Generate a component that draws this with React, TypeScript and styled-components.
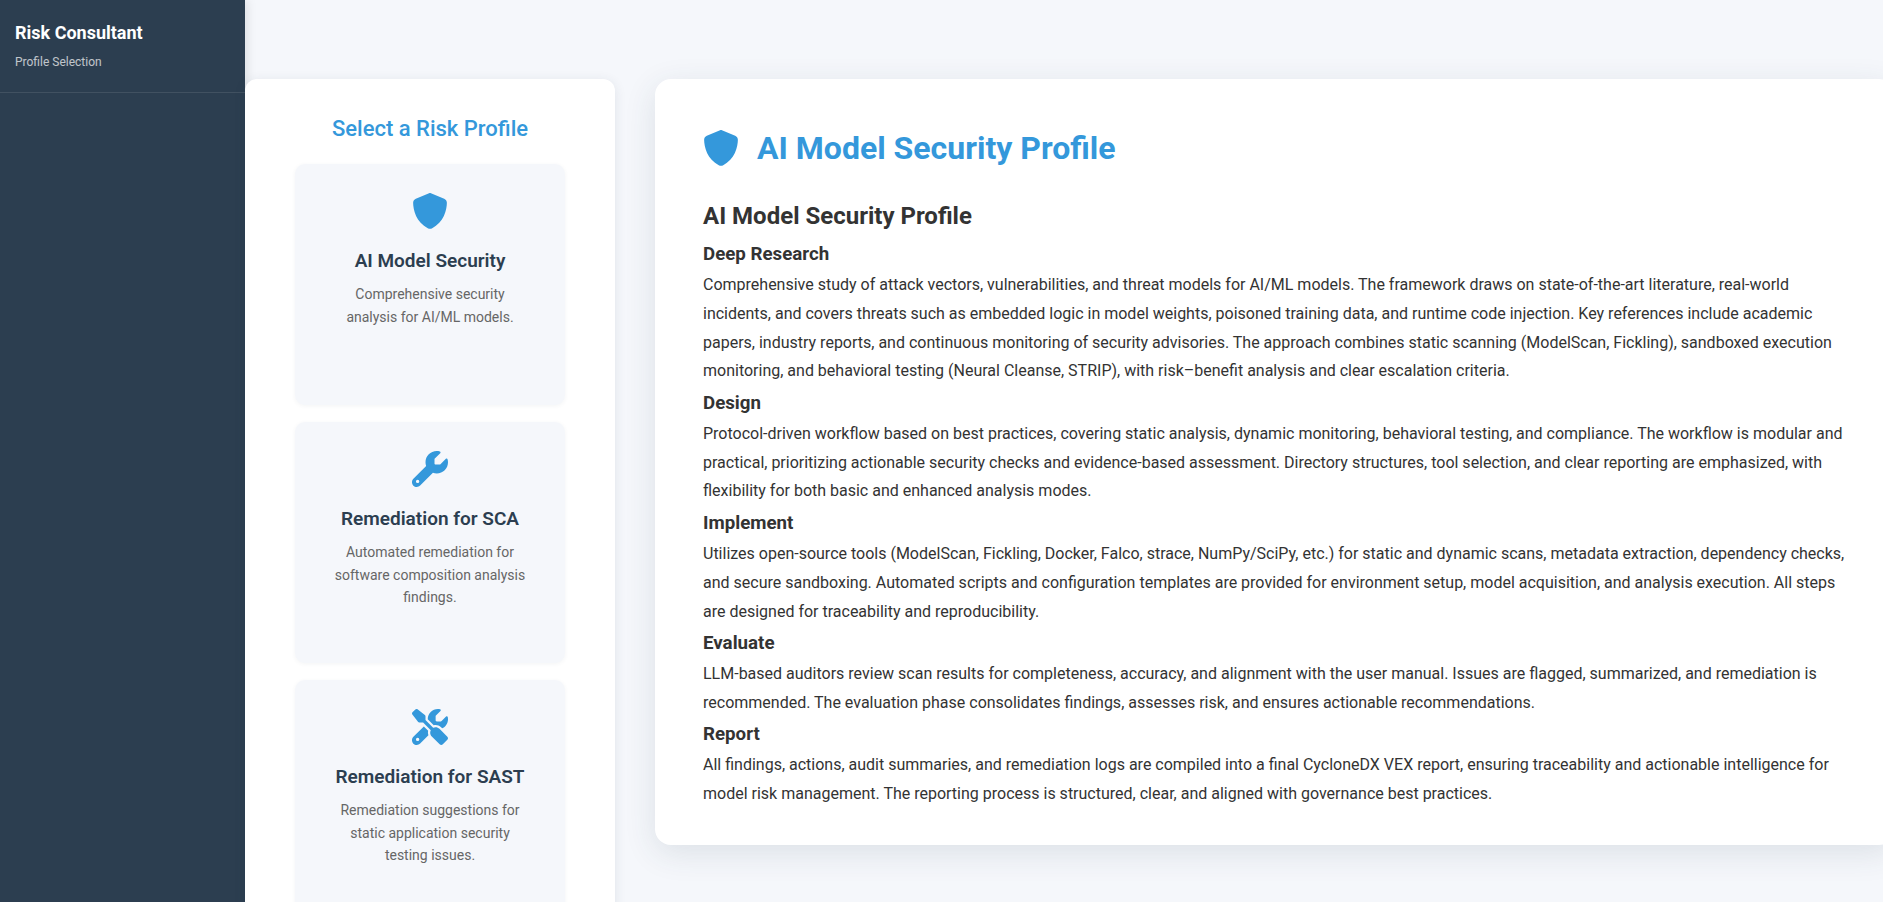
import React from 'react';
import styled, { createGlobalStyle } from 'styled-components';
import { FaShield, FaWrench, FaScrewdriverWrench } from 'react-icons/fa6';

const GlobalStyle = createGlobalStyle`
  * { box-sizing: border-box; }
  body {
    margin: 0;
    background: #f5f7fb;
    color: #333;
    font-family: Roboto, "Liberation Sans", sans-serif;
    overflow: hidden;
  }
  h1, h2, h3, p { margin: 0; }
`;

const Page = styled.div`
  display: flex;
  align-items: flex-start;
  height: 902px;
  overflow: hidden;
`;

const Sidebar = styled.aside`
  flex: 0 0 245px;
  height: 100%;
  background: #2c3e50;
  box-shadow: 2px 0 10px rgba(0, 0, 0, 0.1);
`;

const SidebarHeader = styled.header`
  height: 93px;
  padding: 20px 15px;
  border-bottom: 1px solid rgba(255, 255, 255, 0.1);
`;

const Brand = styled.h2`
  font-size: 18px;
  font-weight: 700;
  line-height: 26px;
  color: #fff;
`;

const BrandNote = styled.p`
  margin-top: 6px;
  font-size: 12px;
  line-height: 20px;
  color: #fff;
  opacity: 0.7;
`;

const Picker = styled.section`
  flex: 0 0 370px;
  height: 960px;
  margin-top: 79px;
  padding: 32px 50px;
  background: #fff;
  border-radius: 12px;
  box-shadow: 0 2px 12px rgba(44, 62, 80, 0.1);
`;

const PickerTitle = styled.h2`
  margin-bottom: 18px;
  font-size: 22px;
  font-weight: 500;
  line-height: 35px;
  text-align: center;
  color: #3498db;
`;

const CardList = styled.div`
  display: flex;
  flex-direction: column;
  gap: 17px;
`;

const Card = styled.article`
  display: flex;
  flex-direction: column;
  align-items: center;
  height: 241px;
  padding: 29px 36px;
  border-radius: 10px;
  background: #f5f7fb;
  box-shadow: 0 1px 4px rgba(44, 62, 80, 0.06);
  text-align: center;
`;

const IconBox = styled.span<{ $gap?: number }>`
  display: flex;
  flex: none;
  margin-bottom: ${({ $gap = 0 }) => $gap}px;
  font-size: 36px;
  color: #3498db;
`;

const CardTitle = styled.h3`
  font-size: 19px;
  font-weight: 600;
  line-height: 30px;
  color: #2c3e50;
  white-space: nowrap;
`;

const CardText = styled.p`
  margin-top: 7px;
  font-size: 14px;
  line-height: 22.6px;
  color: #666;
`;

const Detail = styled.main`
  flex: 0 0 1240px;
  height: 766px;
  margin: 79px 0 0 40px;
  padding: 40px 48px;
  background: #fff;
  border-radius: 16px;
  box-shadow: 0 8px 32px rgba(44, 62, 80, 0.12);
`;

const DetailHeader = styled.header`
  display: flex;
  align-items: center;
  gap: 18px;
  height: 58px;
  margin-bottom: 17.15px;
`;

const DetailTitle = styled.h1`
  font-size: 32px;
  font-weight: 700;
  color: #3498db;
`;

const Report = styled.article`
  font-size: 16px;
  line-height: 1.8;

  h2, h3 {
    padding-top: 0.5px;
    margin-bottom: -0.5px;
  }
  h2 { font-size: 24px; }
  h3 { font-size: 18.72px; }
`;

const profiles = [
  { icon: FaShield, title: 'AI Model Security', text: 'Comprehensive security analysis for AI/ML models.' },
  { icon: FaWrench, title: 'Remediation for SCA', text: 'Automated remediation for software composition analysis findings.' },
  { icon: FaScrewdriverWrench, title: 'Remediation for SAST', text: 'Remediation suggestions for static application security testing issues.' },
];

const sections = [
  {
    title: 'Deep Research',
    text: 'Comprehensive study of attack vectors, vulnerabilities, and threat models for AI/ML models. The framework draws on state-of-the-art literature, real-world incidents, and covers threats such as embedded logic in model weights, poisoned training data, and runtime code injection. Key references include academic papers, industry reports, and continuous monitoring of security advisories. The approach combines static scanning (ModelScan, Fickling), sandboxed execution monitoring, and behavioral testing (Neural Cleanse, STRIP), with risk–benefit analysis and clear escalation criteria.',
  },
  {
    title: 'Design',
    text: 'Protocol-driven workflow based on best practices, covering static analysis, dynamic monitoring, behavioral testing, and compliance. The workflow is modular and practical, prioritizing actionable security checks and evidence-based assessment. Directory structures, tool selection, and clear reporting are emphasized, with flexibility for both basic and enhanced analysis modes.',
  },
  {
    title: 'Implement',
    text: 'Utilizes open-source tools (ModelScan, Fickling, Docker, Falco, strace, NumPy/SciPy, etc.) for static and dynamic scans, metadata extraction, dependency checks, and secure sandboxing. Automated scripts and configuration templates are provided for environment setup, model acquisition, and analysis execution. All steps are designed for traceability and reproducibility.',
  },
  {
    title: 'Evaluate',
    text: 'LLM-based auditors review scan results for completeness, accuracy, and alignment with the user manual. Issues are flagged, summarized, and remediation is recommended. The evaluation phase consolidates findings, assesses risk, and ensures actionable recommendations.',
  },
  {
    title: 'Report',
    text: 'All findings, actions, audit summaries, and remediation logs are compiled into a final CycloneDX VEX report, ensuring traceability and actionable intelligence for model risk management. The reporting process is structured, clear, and aligned with governance best practices.',
  },
];

export default function App() {
  return (
    <>
      <GlobalStyle />
      <Page>
        <Sidebar>
          <SidebarHeader>
            <Brand>Risk Consultant</Brand>
            <BrandNote>Profile Selection</BrandNote>
          </SidebarHeader>
        </Sidebar>
        <Picker>
          <PickerTitle>Select a Risk Profile</PickerTitle>
          <CardList>
            {profiles.map(({ icon: Icon, title, text }) => (
              <Card key={title}>
                <IconBox $gap={17}><Icon /></IconBox>
                <CardTitle>{title}</CardTitle>
                <CardText>{text}</CardText>
              </Card>
            ))}
          </CardList>
        </Picker>
        <Detail>
          <DetailHeader>
            <IconBox><FaShield /></IconBox>
            <DetailTitle>AI Model Security Profile</DetailTitle>
          </DetailHeader>
          <Report>
            <h2>AI Model Security Profile</h2>
            {sections.map(({ title, text }) => (
              <section key={title}>
                <h3>{title}</h3>
                <p>{text}</p>
              </section>
            ))}
          </Report>
        </Detail>
      </Page>
    </>
  );
}
